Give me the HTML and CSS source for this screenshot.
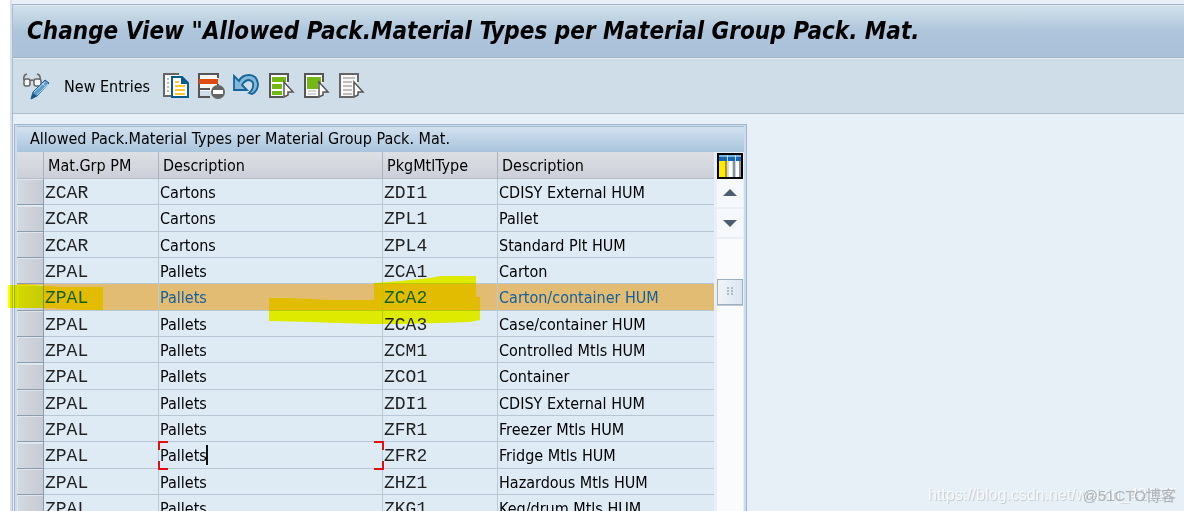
FILE: index.html
```html
<!DOCTYPE html>
<html lang="en">
<head>
<meta charset="utf-8">
<title>Change View</title>
<link rel="stylesheet" href="styles.css">
</head>
<body>
<div class="window">
  <header class="titlebar"><h1>Change View "Allowed Pack.Material Types per Material Group Pack. Mat.</h1></header>
  <nav class="toolbar" aria-label="Application toolbar">
    <button class="tool tool-first" aria-label="Display / Change"><svg width="30" height="30" viewBox="0 0 30 30" fill="none"><g stroke="#666" stroke-width="1.500"><rect x="3" y="8" width="6" height="7" rx="2" fill="#f4f6f8"/><rect x="13" y="8" width="7" height="7" rx="2" fill="#f4f6f8"/><path d="M9 10Q11 8 13 10M3 9Q2 4 6 3M19 9Q20 4 16 3"/></g><path d="M10 28L12 21L24 9L28 12L16 25Z" fill="#5d9bc9" stroke="#205f91"/><path d="M13 21L24 11M16 24L27 13M21 12L25 16" stroke="#b2d4eb"/><path d="M10 28L12 22L16 25Z" fill="#17598c"/></svg></button>
    <button class="tool-text">New Entries</button>
    <button class="tool" aria-label="Copy As"><svg width="30" height="30" viewBox="0 0 30 30" fill="none"><path d="M17 3H2V25H10" fill="#f8f8f8" stroke="#666" stroke-width="2"/><path d="M5 8H7M5 12H7M5 16H7M5 20H7" stroke="#aaa" stroke-width="1.500"/><path d="M10 6H20L26 12V26H10Z" fill="#fff" stroke="#075b91" stroke-width="2"/><path d="M19 5L27 13H19Z" fill="#075b91"/><path d="M13 11H17M13 15H23M13 19H23M13 23H23" stroke="#ffc72c" stroke-width="2"/></svg></button>
    <button class="tool" aria-label="Delete"><svg width="30" height="30" viewBox="0 0 30 30" fill="none"><path d="M2 3H21V20H2Z" fill="#f6f6f6"/><path d="M21 7V3H2V26H13M2 18H13M21 13V17" stroke="#555" stroke-width="2"/><path d="M2 8H21V13H2Z" fill="#dc4d12"/><circle cx="21" cy="21" r="7" fill="#666"/><path d="M16 19H26V23H16Z" fill="#fff"/></svg></button>
    <button class="tool" aria-label="Undo"><svg width="30" height="30" viewBox="0 0 30 30" fill="none"><path d="M2 5V19H15L10 14Q13 9 17 9Q22 10 21 15Q21 19 17 22L20 23Q26 20 26 13Q25 4 17 4Q10 4 7 10Z" fill="#84b7d9" stroke="#17659a" stroke-width="1.800"/></svg></button>
    <button class="tool" aria-label="Select All"><svg width="30" height="30" viewBox="0 0 30 30" fill="none"><path d="M16 26H3V3H21V11" fill="#fff" stroke="#555" stroke-width="2"/><path d="M5 6H19V11H5ZM5 13H15V18H5ZM5 20H15V24H5Z" fill="#74b816"/><path d="M17 11L26 21H21V24L17 26Z" fill="#fff" stroke="#555" stroke-width="1.500"/></svg></button>
    <button class="tool" aria-label="Select Block"><svg width="30" height="30" viewBox="0 0 30 30" fill="none"><path d="M16 26H3V3H21V11" fill="#fff" stroke="#555" stroke-width="2"/><path d="M5 6H19V13H16V18H5Z" fill="#74b816"/><path d="M6 20H14M6 23H14" stroke="#aaa"/><path d="M17 11L26 21H21V24L17 26Z" fill="#fff" stroke="#555" stroke-width="1.500"/></svg></button>
    <button class="tool" aria-label="Deselect All"><svg width="30" height="30" viewBox="0 0 30 30" fill="none"><path d="M16 26H3V3H21V11" fill="#f8f8f8" stroke="#666" stroke-width="2"/><path d="M6 7H18M6 11H15M6 15H15M6 19H15M6 23H15" stroke="#aaa" stroke-width="1.500"/><path d="M17 11L26 21H21V24L17 26Z" fill="#fff" stroke="#555" stroke-width="1.500"/></svg></button>
  </nav>
  <main class="content">
    <section class="panel">
      <h2>Allowed Pack.Material Types per Material Group Pack. Mat.</h2>
      <div class="grid">
        <table>
          <colgroup><col class="c-sel"><col class="c-key"><col class="c-desc"><col class="c-type"><col></colgroup>
          <thead><tr><th></th><th>Mat.Grp PM</th><th>Description</th><th>PkgMtlType</th><th>Description</th></tr></thead>
          <tbody>
            <tr><td><button class="sel" aria-label="Select row"></button></td><td class="code">ZCAR</td><td>Cartons</td><td class="code">ZDI1</td><td>CDISY External HUM</td></tr>
            <tr><td><button class="sel" aria-label="Select row"></button></td><td class="code">ZCAR</td><td>Cartons</td><td class="code">ZPL1</td><td>Pallet</td></tr>
            <tr><td><button class="sel" aria-label="Select row"></button></td><td class="code">ZCAR</td><td>Cartons</td><td class="code">ZPL4</td><td>Standard Plt HUM</td></tr>
            <tr><td><button class="sel" aria-label="Select row"></button></td><td class="code">ZPAL</td><td>Pallets</td><td class="code">ZCA1</td><td>Carton</td></tr>
            <tr class="selected"><td><button class="sel" aria-label="Select row"></button></td><td class="code">ZPAL</td><td>Pallets</td><td class="code">ZCA2</td><td>Carton/container HUM</td></tr>
            <tr><td><button class="sel" aria-label="Select row"></button></td><td class="code">ZPAL</td><td>Pallets</td><td class="code">ZCA3</td><td>Case/container HUM</td></tr>
            <tr><td><button class="sel" aria-label="Select row"></button></td><td class="code">ZPAL</td><td>Pallets</td><td class="code">ZCM1</td><td>Controlled Mtls HUM</td></tr>
            <tr><td><button class="sel" aria-label="Select row"></button></td><td class="code">ZPAL</td><td>Pallets</td><td class="code">ZCO1</td><td>Container</td></tr>
            <tr><td><button class="sel" aria-label="Select row"></button></td><td class="code">ZPAL</td><td>Pallets</td><td class="code">ZDI1</td><td>CDISY External HUM</td></tr>
            <tr><td><button class="sel" aria-label="Select row"></button></td><td class="code">ZPAL</td><td>Pallets</td><td class="code">ZFR1</td><td>Freezer Mtls HUM</td></tr>
            <tr><td><button class="sel" aria-label="Select row"></button></td><td class="code">ZPAL</td><td class="focused"><input type="text" value="Pallets" aria-label="Description"><span class="caret"></span><span class="corners"></span></td><td class="code">ZFR2</td><td>Fridge Mtls HUM</td></tr>
            <tr><td><button class="sel" aria-label="Select row"></button></td><td class="code">ZPAL</td><td>Pallets</td><td class="code">ZHZ1</td><td>Hazardous Mtls HUM</td></tr>
            <tr><td><button class="sel" aria-label="Select row"></button></td><td class="code">ZPAL</td><td>Pallets</td><td class="code">ZKG1</td><td>Keg/drum Mtls HUM</td></tr>
          </tbody>
        </table>
        <div class="side">
          <button class="config" aria-label="Configuration"><svg width="26" height="26" viewBox="0 0 26 26"><path d="M0 0H26V26H0Z" fill="#000"/><path d="M2 2H24V24H2Z" fill="#d8dce3"/><path d="M2 2H24V8H2Z" fill="#1768b0"/><path d="M2 2H24V4H2Z" fill="#7cb5e5"/><path d="M2 8H9V24H2Z" fill="#ffea00"/><path d="M8 8H10V24H8Z" fill="#b89b00"/><path d="M12 8H15V24H12ZM19 8H22V24H19Z" fill="#fff"/><path d="M16 8H18V24H16ZM22 8H24V24H22Z" fill="#8c9098"/><path d="M10 2H11V24H10ZM18 2H19V24H18Z" fill="#c3dced"/></svg></button>
          <button class="arrow" aria-label="Scroll up"><svg width="14" height="8" viewBox="0 0 14 8"><path d="M0 7L7 0L14 7Z" fill="#4d5f6e"/></svg></button>
          <button class="arrow" aria-label="Scroll down"><svg width="14" height="8" viewBox="0 0 14 8"><path d="M0 1L7 8L14 1Z" fill="#4d5f6e"/></svg></button>
          <div class="track"><button class="thumb" aria-label="Scroll position"><svg width="6" height="10" viewBox="0 0 6 10"><path d="M0 1H2M4 1H6M0 4H2M4 4H6M0 7H2M4 7H6" stroke="#9aa9b6" stroke-width="1.500"/></svg></button></div>
        </div>
      </div>
      <svg class="marker" width="480" height="60" viewBox="0 0 480 60" fill="#ff0"><path d="M8 14H16L22 13L60 16L103 16V39L80 39L50 37L8 37Z"/><path d="M374 12L400 10L430 7L440 5H476V26H480V49L470 51L440 52L400 53H370L340 52L310 51L269 50V27L290 27L330 29L374 29Z"/></svg>
    </section>
  </main>
</div>
<div class="watermark"><span class="mark-url">https://blog.csdn.net/weixin_42137700</span><span class="mark-site">@51CTO博客</span></div>
</body>
</html>
```
FILE: styles.css
```css
* { box-sizing: border-box; }
body {
  margin: 0;
  height: 100vh;
  overflow: hidden;
  padding: 4px 0 0 12px;
  background: linear-gradient(90deg, #fff 0, #fff 10px, #d8e0ed 10px, #d8e0ed 12px, #e9eff7 12px);
  font-family: "DejaVu Sans Condensed", "DejaVu Sans", sans-serif;
  font-size: 16px;
  color: #000;
  position: relative;
}
button { font: inherit; color: inherit; border: 0; padding: 0; background: none; }
svg { display: block; }
.window { border-left: 1px solid #a9bccf; height: 100%; background: #e8f0f7; }
.titlebar {
  height: 54px;
  display: flex;
  align-items: center;
  padding: 0 14px;
  border-top: 1px solid #a3b5c9;
  border-bottom: 1px solid #9fb3c6;
  background: linear-gradient(#d2e1ec 0, #c4d7e4 20%, #adc4db 52%, #abc1da 100%);
  box-shadow: inset 0 1px #dfe8f0;
}
h1 { margin: 0; font-size: 24px; font-style: italic; font-weight: bold; white-space: nowrap; }
.toolbar {
  height: 56px;
  display: flex;
  align-items: center;
  gap: 5px;
  padding: 0 8px;
  border-top: 1px solid #e6eef4;
  border-bottom: 1px solid #afbecc;
  background: #cfdde8;
}
.tool-text { padding: 0 7px 0 8px; white-space: nowrap; }
.content { padding: 10px 1px; }
.panel {
  position: relative;
  width: 100%;
  max-width: 733px;
  border: 1px solid #9eb6ce;
  padding: 1px 2px;
  background: #cddceb;
}
h2 {
  margin: 0;
  height: 26px;
  line-height: 23px;
  padding: 0 13px;
  font-size: 16px;
  font-weight: normal;
  border-top: 1px solid #a5bbd0;
  background: linear-gradient(#d2e1ef, #a9c4dd);
}
.grid { display: flex; background: #e8eff6; }
table { flex: 1; min-width: 0; table-layout: fixed; border-collapse: separate; border-spacing: 0; }
.c-sel { width: 27px; }
.c-key { width: 115px; }
.c-desc { width: 224px; }
.c-type { width: 115px; }
th {
  height: 27px;
  padding: 0 4px;
  text-align: left;
  font-weight: normal;
  border-right: 1px solid #a9b4c0;
  border-bottom: 1px solid #b5bec8;
  background: linear-gradient(#dce0e4, #cccfd8);
}
th:last-child, td:last-child { border-right: 0; }
td {
  height: 26px;
  padding: 2px 1px 0;
  line-height: 20px;
  white-space: nowrap;
  background: #deebf5;
  border-right: 1px solid #b9c9d6;
  border-bottom: 1px solid #b7c7d5;
}
tr:nth-child(3n+2) td { height: 27px; }
td:first-child { padding: 0; border-color: #8c9cac; }
.sel { display: block; width: 100%; height: 25px; background: linear-gradient(90deg, #d4d9e1, #c6cbd4); box-shadow: inset 1px 1px #e0e5eb; }
.code { font-family: "Liberation Mono", monospace; font-size: 18px; color: #222; }
.selected td { background: #e2bc72; color: #145f9e; }
.focused { position: relative; }
.focused input { display: block; width: 100%; height: 20px; border: 0; padding: 0; background: none; font: inherit; outline: none; }
.caret { position: absolute; left: 47px; top: 3px; width: 2px; height: 20px; background: #111; }
.corners {
  position: absolute;
  inset: -1px -2px -2px -1px;
  pointer-events: none;
  --r: linear-gradient(#e01010, #e01010);
  background:
    var(--r) 0 0 / 10px 2px, var(--r) 0 0 / 2px 9px,
    var(--r) 100% 0 / 10px 2px, var(--r) 100% 0 / 2px 9px,
    var(--r) 0 100% / 10px 2px, var(--r) 0 100% / 2px 9px,
    var(--r) 100% 100% / 10px 2px, var(--r) 100% 100% / 2px 9px;
  background-repeat: no-repeat;
}
.side { width: 30px; padding: 0 1px 0 3px; display: flex; flex-direction: column; }
.config { height: 27px; }
.arrow { height: 28px; margin-bottom: 2px; display: grid; place-items: center; background: #f5f8fc; }
.track { flex: 1; padding-top: 40px; background: #fafbfd; }
.thumb { width: 100%; height: 26px; display: grid; place-items: center; border: 1px solid #9eafbd; background: linear-gradient(90deg, #f0f4f8, #dae6f1); box-shadow: 0 1px #c0c8d0; }
.marker { position: absolute; left: -15px; top: 146px; mix-blend-mode: multiply; pointer-events: none; }
.watermark { position: absolute; right: 8px; bottom: 6px; display: grid; justify-items: end; align-items: center; font-family: "Liberation Sans", "Noto Sans CJK SC", sans-serif; white-space: nowrap; }
.watermark span { grid-area: 1 / 1; }
.mark-url { font-size: 16px; color: #f8fafc; text-shadow: 1px 1px 1px #c3c9d0; width: 248px; overflow: hidden; }
.mark-site { font-size: 15px; color: #aeb3b9; }
```
